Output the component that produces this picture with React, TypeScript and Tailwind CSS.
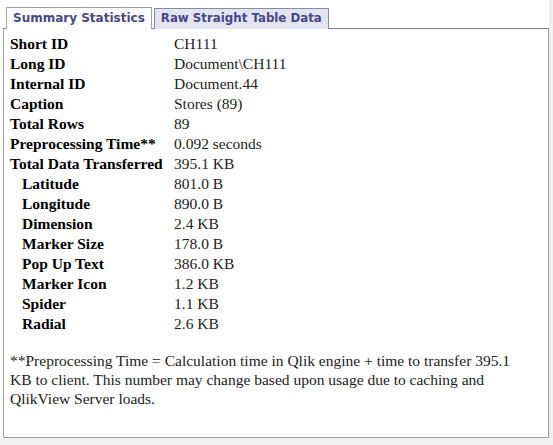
const rows: { label: string; value: string; sub?: boolean }[] = [
  { label: 'Short ID', value: 'CH111' },
  { label: 'Long ID', value: 'Document\\CH111' },
  { label: 'Internal ID', value: 'Document.44' },
  { label: 'Caption', value: 'Stores (89)' },
  { label: 'Total Rows', value: '89' },
  { label: 'Preprocessing Time**', value: '0.092 seconds' },
  { label: 'Total Data Transferred', value: '395.1 KB' },
  { label: 'Latitude', value: '801.0 B', sub: true },
  { label: 'Longitude', value: '890.0 B', sub: true },
  { label: 'Dimension', value: '2.4 KB', sub: true },
  { label: 'Marker Size', value: '178.0 B', sub: true },
  { label: 'Pop Up Text', value: '386.0 KB', sub: true },
  { label: 'Marker Icon', value: '1.2 KB', sub: true },
  { label: 'Spider', value: '1.1 KB', sub: true },
  { label: 'Radial', value: '2.6 KB', sub: true },
];

export default function App() {
  return (
    <div className="h-[445px] w-[553px] bg-[#f0f0f0]">
      <div className="flex h-[438px] w-[549px] flex-col bg-white pl-[3px] pt-[7px]">
        <div className="relative z-10 flex items-end pl-[3px] font-['DejaVu_Sans',sans-serif] text-[12px] font-bold text-[#47478a]">
          <div className="flex h-[22px] items-center border border-b-0 border-[#a0a0a0] bg-white px-[6px] pb-[1px]">
            Summary Statistics
          </div>
          <div className="ml-[2px] flex h-[21px] items-center border border-b-0 border-[#8a8aa6] bg-[#e4e4f0] px-[6px] text-[11.8px]">
            Raw Straight Table Data
          </div>
        </div>
        <div className="-mt-px flex-1 border border-[#a0a0a0] border-t-[#7a7a9a] px-[6px] pt-[5px] font-['Liberation_Serif',serif] text-[#222]">
          <div className="grid grid-cols-[164px_1fr] text-[15.5px] leading-[20px]">
            {rows.map((r) => (
              <div key={r.label} className="contents">
                <div className={r.sub ? 'pl-[12px] font-bold text-black' : 'font-bold text-black'}>{r.label}</div>
                <div>{r.value}</div>
              </div>
            ))}
          </div>
          <p className="mt-[17px] w-[505px] text-[15.5px] leading-[19px]">
            **Preprocessing Time = Calculation time in Qlik engine + time to transfer 395.1 KB to client. This number may
            change based upon usage due to caching and QlikView Server loads.
          </p>
        </div>
      </div>
    </div>
  );
}
